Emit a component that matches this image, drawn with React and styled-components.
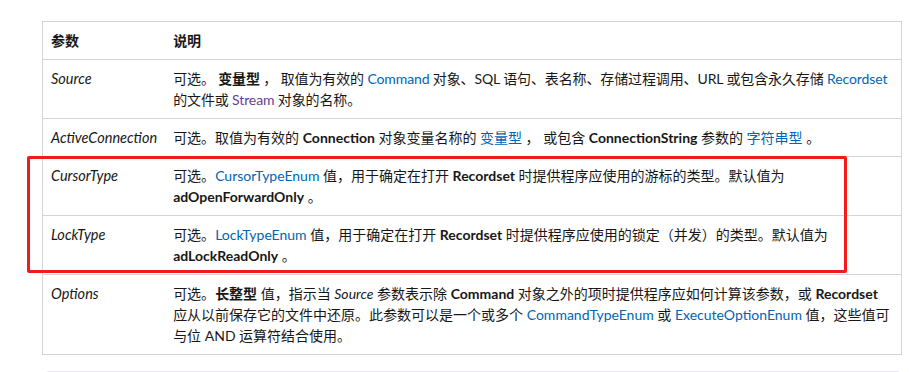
import React from 'react';
import styled, { createGlobalStyle } from 'styled-components';

const GlobalStyle = createGlobalStyle`
  body {
    margin: 0;
    background: #ffffff;
    font-family: 'Lato', 'Noto Sans CJK SC', sans-serif;
    color: #171717;
    overflow: hidden;
  }
`;

const Page = styled.div`
  width: 921px;
  height: 372px;
  padding-left: 42px;
  box-sizing: border-box;
  overflow: hidden;
`;

// the section title is scrolled almost out of view
const Heading = styled.h2`
  margin: -31px 0 0 3px;
  font-size: 28px;
  line-height: 34px;
  font-weight: 600;
  height: 34px;
`;

const Wrap = styled.div`
  position: relative;
  width: 860px;
  margin-top: 18px;
`;

const Table = styled.table`
  width: 100%;
  border-collapse: collapse;
  border: 1px solid #d4d4d4;
  font-size: 14px;
  line-height: 21px;
`;

const Th = styled.th`
  text-align: left;
  font-weight: 600;
  padding: 8px;
  width: ${({ w }) => w || 'auto'};
  border-bottom: 1px solid #d4d4d4;
`;

const Td = styled.td`
  vertical-align: top;
  padding: 8px;
  border-bottom: 1px solid #d4d4d4;
  font-style: ${({ italic }) => (italic ? 'italic' : 'normal')};
  font-size: ${({ italic }) => (italic ? '14.5px' : '14px')};
  letter-spacing: ${({ tight }) => (tight ? '-0.12px' : 'normal')};
`;

const A = styled.span`
  color: ${({ visited }) => (visited ? '#6b3a9c' : '#0065b3')};
`;

const B = styled.strong`
  font-weight: 700;
`;

const I = styled.em`
  font-style: italic;
`;

const Highlight = styled.div`
  position: absolute;
  left: -15px;
  top: 135px;
  width: 820px;
  height: 117px;
  border: 3px solid #f51a1a;
  border-radius: 2px;
  box-sizing: border-box;
  pointer-events: none;
`;

const NoteTop = styled.div`
  margin-top: 16px;
  margin-left: 4px;
  width: 854px;
  height: 10px;
  border-top: 2px solid #ece3f8;
  border-radius: 3px 3px 0 0;
`;

const App = () => {
  return (
    <React.Fragment>
      <GlobalStyle />
      <Page>
        <Heading>参数</Heading>
        <Wrap>
          <Table>
            <thead>
              <tr>
                <Th w='105px'>参数</Th>
                <Th>说明</Th>
              </tr>
            </thead>
            <tbody>
              <tr>
                <Td italic>Source</Td>
                <Td tight>
                  可选。 <B>变量型</B> ， 取值为有效的 <A>Command</A> 对象、SQL 语句、表名称、存储过程调用、URL 或包含永久存储 <A>Recordset</A> 的文件或 <A visited>Stream</A> 对象的名称。
                </Td>
              </tr>
              <tr>
                <Td italic>ActiveConnection</Td>
                <Td>
                  可选。取值为有效的 <B>Connection</B> 对象变量名称的 <A>变量型</A> ， 或包含 <B>ConnectionString</B> 参数的 <A>字符串型</A> 。
                </Td>
              </tr>
              <tr>
                <Td italic>CursorType</Td>
                <Td>
                  可选。<A>CursorTypeEnum</A> 值，用于确定在打开 <B>Recordset</B> 时提供程序应使用的游标的类型。默认值为 <B>adOpenForwardOnly</B> 。
                </Td>
              </tr>
              <tr>
                <Td italic>LockType</Td>
                <Td>
                  可选。<A>LockTypeEnum</A> 值，用于确定在打开 <B>Recordset</B> 时提供程序应使用的锁定（并发）的类型。默认值为 <B>adLockReadOnly</B> 。
                </Td>
              </tr>
              <tr>
                <Td italic>Options</Td>
                <Td>
                  可选。<B>长整型</B> 值，指示当 <I>Source</I> 参数表示除 <B>Command</B> 对象之外的项时提供程序应如何计算该参数，或 <B>Recordset</B> 应从以前保存它的文件中还原。此参数可以是一个或多个 <A>CommandTypeEnum</A> 或 <A>ExecuteOptionEnum</A> 值，这些值可与位 AND 运算符结合使用。
                </Td>
              </tr>
            </tbody>
          </Table>
          <Highlight />
        </Wrap>
        <NoteTop />
      </Page>
    </React.Fragment>
  );
};

export default App;
